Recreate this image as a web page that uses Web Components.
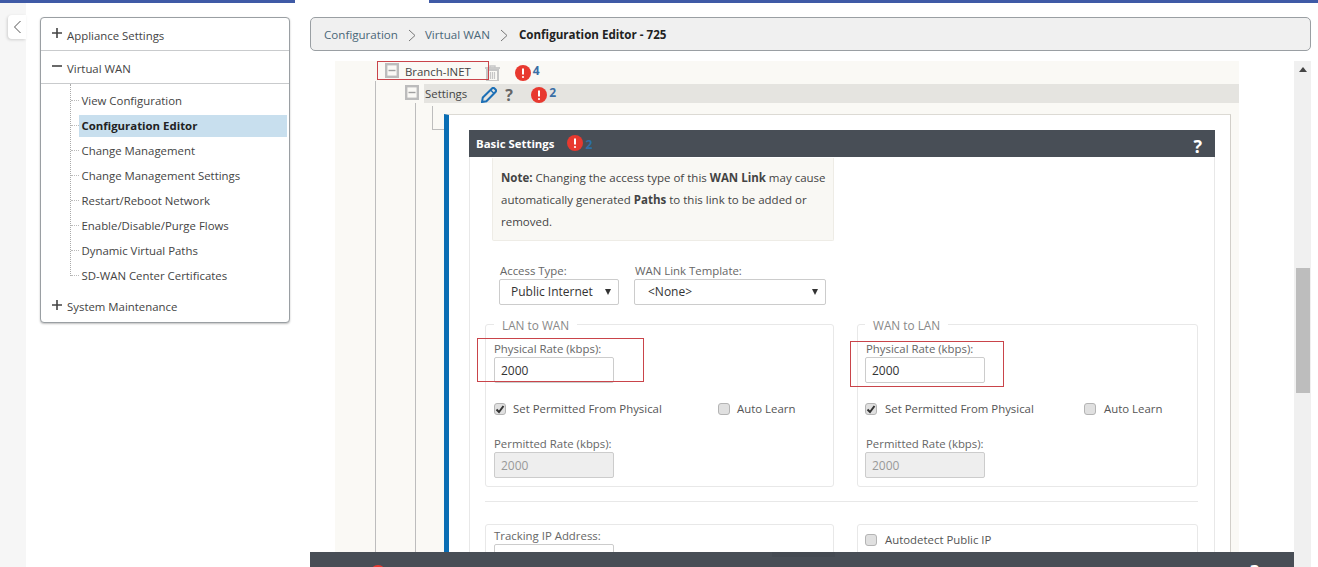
<!DOCTYPE html>
<html>
<head>
<meta charset="utf-8">
<title>Configuration Editor</title>
<style>
  html, body { margin: 0; height: 567px; overflow: hidden; background: #fff; }
  body { font: 11.4px/16px "Open Sans", "Liberation Sans", sans-serif; color: #444; }
  .gap-row { display: flex; gap: 23px; }
</style>
</head>
<body>
<top-stripe></top-stripe>
<app-layout>
  <collapse-rail></collapse-rail>
  <nav-panel>
    <nav-section label="Appliance Settings" icon="plus" divider></nav-section>
    <nav-section label="Virtual WAN" icon="minus" divider></nav-section>
    <nav-group>
      <nav-item>View Configuration</nav-item>
      <nav-item active>Configuration Editor</nav-item>
      <nav-item>Change Management</nav-item>
      <nav-item>Change Management Settings</nav-item>
      <nav-item>Restart/Reboot Network</nav-item>
      <nav-item>Enable/Disable/Purge Flows</nav-item>
      <nav-item>Dynamic Virtual Paths</nav-item>
      <nav-item>SD-WAN Center Certificates</nav-item>
    </nav-group>
    <nav-section label="System Maintenance" icon="plus"></nav-section>
  </nav-panel>
  <main-pane>
    <bread-crumb>
      <a>Configuration</a>
      <a>Virtual WAN</a>
      <b>Configuration Editor - 725</b>
    </bread-crumb>
    <scroll-pane>
      <config-tree>
        <tree-row slot="branch" label="Branch-INET" level="branch">
          <tree-icon name="trash" style="margin:4px 0 0 14px"></tree-icon>
          <alert-badge count="4" style="margin:4px 0 0 15px"></alert-badge>
        </tree-row>
        <tree-row slot="settings" label="Settings" level="settings">
          <tree-icon name="pencil" style="margin-left:14px"></tree-icon>
          <tree-icon name="help" style="margin-left:8px"></tree-icon>
          <alert-badge count="2" style="margin-left:18px"></alert-badge>
        </tree-row>
        <settings-card title="Basic Settings">
          <note-box>
            <b>Note:</b> Changing the access type of this <b>WAN Link</b> may cause automatically generated <b>Paths</b> to this link to be added or removed.
          </note-box>
          <select-row>
            <select-field label="Access Type:" value="Public Internet" width="120"></select-field>
            <select-field label="WAN Link Template:" value="&lt;None&gt;" width="192" pad="13"></select-field>
          </select-row>
          <div class="gap-row" style="margin-top:10px">
            <rate-group legend="LAN to WAN" width="349" auto="224" inset="8" mark="-8,23,167,44"></rate-group>
            <rate-group legend="WAN to LAN" width="341" auto="218" inset="7" mark="-7,26,154,46"></rate-group>
          </div>
          <line-rule></line-rule>
          <div class="gap-row">
            <plain-box width="349"><rate-field label="Tracking IP Address:"></rate-field></plain-box>
            <plain-box width="341"><check-field style="margin:4px 0 0 -1px;--check-gap:8px">Autodetect Public IP</check-field></plain-box>
          </div>
        </settings-card>
      </config-tree>
      <footer-bar slot="footer"></footer-bar>
    </scroll-pane>
  </main-pane>
</app-layout>

<script>
const stripeTmp = document.createElement('template');
stripeTmp.innerHTML = `
  <style>
    :host { display: flex; height: 3px; justify-content: space-between; }
    div { background: #3f5aa6; }
    .a { width: 295px; }
    .b { width: 889px; }
  </style>
  <div class="a"></div><div class="b"></div>`;

class TopStripe extends HTMLElement {
  connectedCallback() {
    this.attachShadow({ mode: 'open' }).appendChild(stripeTmp.content.cloneNode(true));
  }
}
customElements.define('top-stripe', TopStripe);

const layoutTmp = document.createElement('template');
layoutTmp.innerHTML = `
  <style>
    :host { display: flex; height: 564px; align-items: flex-start; }
  </style>
  <slot></slot>`;

class AppLayout extends HTMLElement {
  connectedCallback() {
    this.attachShadow({ mode: 'open' }).appendChild(layoutTmp.content.cloneNode(true));
  }
}
customElements.define('app-layout', AppLayout);

const railTmp = document.createElement('template');
railTmp.innerHTML = `
  <style>
    :host { display: block; width: 26px; height: 564px; background: #f6f6f6; padding-top: 12px; box-sizing: border-box; flex: none; }
    .tab { margin-left: 8px; width: 18px; height: 24px; background: #fff; border-radius: 4px 0 0 4px; box-shadow: -1px 1px 3px rgba(0,0,0,.16); display: flex; align-items: center; justify-content: center; }
  </style>
  <div class="tab">
    <svg width="9" height="14" viewBox="0 0 9 14"><path d="M7.5 1 1.5 7l6 6" fill="none" stroke="#555" stroke-width="1"/></svg>
  </div>`;

class CollapseRail extends HTMLElement {
  connectedCallback() {
    this.attachShadow({ mode: 'open' }).appendChild(railTmp.content.cloneNode(true));
  }
}
customElements.define('collapse-rail', CollapseRail);

const navTmp = document.createElement('template');
navTmp.innerHTML = `
  <style>
    :host { display: block; flex: none; width: 250px; margin: 14px 0 0 14px; box-sizing: border-box; border: 1px solid #9a9fa3; border-radius: 4px; box-shadow: 0 1px 2px rgba(0,0,0,.25); background: #fff; }
  </style>
  <slot></slot>`;

class NavPanel extends HTMLElement {
  connectedCallback() {
    this.attachShadow({ mode: 'open' }).appendChild(navTmp.content.cloneNode(true));
  }
}
customElements.define('nav-panel', NavPanel);

class NavSection extends HTMLElement {
  connectedCallback() {
    const plus = this.getAttribute('icon') === 'plus';
    const root = this.attachShadow({ mode: 'open' });
    root.innerHTML = `
      <style>
        :host { display: flex; align-items: center; height: 32px; padding-left: 11px; color: #444; }
        :host([divider]) { height: 33px; box-sizing: border-box; border-bottom: 1px solid #c9cbcd; }
        svg { margin-right: 5px; margin-top: -2px; }
        span { padding-top: 2px; }
        :host([divider]) span { padding-top: 3px; }
      </style>
      <svg width="10" height="10" viewBox="0 0 10 10">
        <path d="M0 5h10${plus ? 'M5 0v10' : ''}" stroke="#444" stroke-width="1.6" fill="none"/>
      </svg>
      <span>${this.getAttribute('label')}</span>`;
  }
}
customElements.define('nav-section', NavSection);

const groupTmp = document.createElement('template');
groupTmp.innerHTML = `
  <style>
    :host { display: block; box-sizing: border-box; height: 192px; margin: 0 0 14px 29px; padding-top: 4px; border-left: 1px dotted #aaa; }
  </style>
  <slot></slot>`;

class NavGroup extends HTMLElement {
  connectedCallback() {
    this.attachShadow({ mode: 'open' }).appendChild(groupTmp.content.cloneNode(true));
  }
}
customElements.define('nav-group', NavGroup);

const itemTmp = document.createElement('template');
itemTmp.innerHTML = `
  <style>
    :host { display: flex; align-items: center; height: 25px; }
    i { width: 8px; border-top: 1px dotted #bbb; flex: none; }
    span { flex: none; width: 208px; height: 22px; line-height: 22px; padding-left: 2.5px; box-sizing: border-box; color: #444; }
    :host([active]) span { background: #c8dfee; font-weight: 700; color: #222; }
  </style>
  <i></i><span><slot></slot></span>`;

class NavItem extends HTMLElement {
  connectedCallback() {
    this.attachShadow({ mode: 'open' }).appendChild(itemTmp.content.cloneNode(true));
  }
}
customElements.define('nav-item', NavItem);

const mainTmp = document.createElement('template');
mainTmp.innerHTML = `
  <style>
    :host { display: block; flex: none; width: 1001px; margin: 14px 0 0 20px; }
  </style>
  <slot></slot>`;

class MainPane extends HTMLElement {
  connectedCallback() {
    this.attachShadow({ mode: 'open' }).appendChild(mainTmp.content.cloneNode(true));
  }
}
customElements.define('main-pane', MainPane);

class BreadCrumb extends HTMLElement {
  connectedCallback() {
    const parts = [...this.children];
    const root = this.attachShadow({ mode: 'open' });
    const chevron = '<svg width="8" height="13" viewBox="0 0 8 13"><path d="M1 1l6 5.5L1 12" fill="none" stroke="#777" stroke-width="1"/></svg>';
    root.innerHTML = `
      <style>
        :host { display: flex; align-items: center; height: 34px; box-sizing: border-box; margin-bottom: 10px; padding: 2px 13px 0; background: #f0f0f0; border: 1px solid #9a9fa3; border-radius: 5px; color: #4a6778; font-size: 11.6px; }
        svg { margin: 0 9px 0 10px; }
        span + svg + span + svg { margin-right: 11px; }
        b { color: #222; }
      </style>
      ${parts.map(p => p.tagName === 'B' ? `<b>${p.textContent}</b>` : `<span>${p.textContent}</span>${chevron}`).join('')}`;
  }
}
customElements.define('bread-crumb', BreadCrumb);

const scrollTmp = document.createElement('template');
scrollTmp.innerHTML = `
  <style>
    :host { display: flex; height: 506px; }
    .col { width: 984px; flex: none; }
    .view { height: 491px; overflow: hidden; }
    .bar { width: 17px; flex: none; background: #f0f0f0; display: flex; flex-direction: column; align-items: center; }
    .up { margin-top: 6px; border: 4px solid transparent; border-top: 0; border-bottom: 5px solid #444; }
    .thumb { margin-top: 196px; width: 14px; height: 125px; background: #bdbdbd; }
  </style>
  <div class="col">
    <div class="view"><slot></slot></div>
    <slot name="footer"></slot>
  </div>
  <div class="bar"><div class="up"></div><div class="thumb"></div></div>`;

class ScrollPane extends HTMLElement {
  connectedCallback() {
    this.attachShadow({ mode: 'open' }).appendChild(scrollTmp.content.cloneNode(true));
  }
}
customElements.define('scroll-pane', ScrollPane);

const treeTmp = document.createElement('template');
treeTmp.innerHTML = `
  <style>
    :host { display: block; margin-left: 25px; width: 904px; height: 491px; background: #faf9f5; color: #444; overflow: hidden; }
    .top { padding-left: 50px; height: 20px; }
    .level1 { margin-left: 40px; border-left: 1px solid #bdbdbd; padding-top: 3px; height: 468px; }
    .level2 { margin-left: 39px; border-left: 1px solid #bdbdbd; height: 450px; display: flex; align-items: flex-start; }
    .elbow { flex: none; width: 12px; height: 24px; margin: 3px 0 0 16px; border-left: 1px solid #bdbdbd; border-bottom: 1px solid #bdbdbd; box-sizing: border-box; }
  </style>
  <div class="top"><slot name="branch"></slot></div>
  <div class="level1">
    <slot name="settings"></slot>
    <div class="level2">
      <div class="elbow"></div>
      <slot></slot>
    </div>
  </div>`;

class ConfigTree extends HTMLElement {
  connectedCallback() {
    this.attachShadow({ mode: 'open' }).appendChild(treeTmp.content.cloneNode(true));
  }
}
customElements.define('config-tree', ConfigTree);

class TreeRow extends HTMLElement {
  connectedCallback() {
    const settings = this.getAttribute('level') === 'settings';
    const root = this.attachShadow({ mode: 'open' });
    root.innerHTML = `
      <style>
        :host { display: flex; align-items: center; position: relative; height: ${settings ? 19 : 20}px; ${settings ? 'margin-left: 29px;' : ''} }
        .toggle { flex: none; margin-right: ${settings ? 5 : 6}px; ${settings ? 'margin-top: -3px;' : 'margin-top: -1px;'} }
        .label { color: #444; margin-top: ${settings ? 1 : 2}px; }
        .row { display: flex; align-items: center; height: 100%; ${settings ? 'flex: 1; background: #e5e4e0; padding-left: 1px;' : ''} }
        .mark { position: absolute; left: -8px; top: 0; width: 112px; height: 19px; border: 1px solid #c9444a; box-sizing: border-box; pointer-events: none; }
      </style>
      <svg class="toggle" width="14" height="15" viewBox="0 0 14 15">
        <rect x="1.2" y="1.2" width="11.6" height="12.6" fill="none" stroke="#bcbcbc" stroke-width="2.4"/>
        <path d="M3.5 7.5h7" stroke="#a0a0a0" stroke-width="1.4"/>
      </svg>
      <div class="row"><span class="label">${this.getAttribute('label')}</span><slot></slot></div>
      ${settings ? '' : '<div class="mark"></div>'}`;
  }
}
customElements.define('tree-row', TreeRow);

const treeIcons = {
  trash: `<svg width="15" height="16" viewBox="0 0 15 16" style="display:block"><path d="M0 3h15" stroke="#c6c6c6" stroke-width="1.8"/><path d="M5 3V1h5v2" fill="none" stroke="#c6c6c6" stroke-width="1.4"/><path d="M2 5h11v11H2z" fill="none" stroke="#c6c6c6" stroke-width="2"/><path d="M5.5 7v7M7.5 7v7M9.5 7v7" stroke="#c6c6c6" stroke-width="1.2"/></svg>`,
  pencil: `<svg width="16" height="16" viewBox="0 0 16 16" style="display:block"><path d="M1 15l.8-4.4L11 1.5a1.8 1.8 0 0 1 2.5 0l1 1a1.8 1.8 0 0 1 0 2.5L5.4 14.2z" fill="none" stroke="#1c6fb5" stroke-width="2"/><path d="M9.6 3l3.4 3.4" stroke="#1c6fb5" stroke-width="1.4"/></svg>`,
  help: `<span style="font:700 16px/16px 'Open Sans',sans-serif;color:#666;display:block;width:8px">?</span>`
};

class TreeIcon extends HTMLElement {
  connectedCallback() {
    const root = this.attachShadow({ mode: 'open' });
    root.innerHTML = `<style>:host { display: block; flex: none; margin-top: 3px; }</style>${treeIcons[this.getAttribute('name')]}`;
  }
}
customElements.define('tree-icon', TreeIcon);

class AlertBadge extends HTMLElement {
  connectedCallback() {
    const root = this.attachShadow({ mode: 'open' });
    root.innerHTML = `
      <style>
        :host { display: flex; flex: none; align-items: flex-start; height: 16px; margin-top: 3px; color: var(--count, #3a6ea5); }
        span { font-weight: 700; font-size: 12px; line-height: 12px; margin: var(--count-top, 0) 0 0 2px; }
      </style>
      <svg width="16" height="16" viewBox="0 0 16 16">
        <circle cx="8" cy="8" r="8" fill="#e8392f"/>
        <path d="M8 3.5v6" stroke="#fff" stroke-width="2"/>
        <circle cx="8" cy="12" r="1.1" fill="#fff"/>
      </svg>
      <span>${this.getAttribute('count')}</span>`;
  }
}
customElements.define('alert-badge', AlertBadge);

class SettingsCard extends HTMLElement {
  connectedCallback() {
    const root = this.attachShadow({ mode: 'open' });
    root.innerHTML = `
      <style>
        :host { display: block; flex: 1; margin: 11px 8px 0 0; height: 460px; box-sizing: border-box; background: #fff; border-left: 5px solid #0a6eb4; border-top: 1px solid #dcdad4; border-right: 1px solid #d2cfc9; padding: 15px 15px 0 20px; }
        header { display: flex; align-items: center; height: 27px; background: #484e56; color: #fff; font-weight: 700; padding: 0 13px 0 7px; --count: #2f6ea6; --count-top: 4px; }
        alert-badge { margin: -1px 0 0 13px; }
        .q { margin-left: auto; font-size: 18px; line-height: 27px; padding-top: 3px; box-sizing: border-box; height: 27px; }
        .body { border: 1px solid #e8e8e8; border-width: 0 1px; height: 420px; padding: 1px 16px 0 15px; box-sizing: border-box; }
      </style>
      <header><span>${this.getAttribute('title')}</span><alert-badge count="2"></alert-badge><span class="q">?</span></header>
      <div class="body"><slot></slot></div>`;
  }
}
customElements.define('settings-card', SettingsCard);

const noteTmp = document.createElement('template');
noteTmp.innerHTML = `
  <style>
    :host { display: block; width: 342px; margin-left: 7px; box-sizing: border-box; padding: 9px 0 7px 8px; background: #f9f8f4; border: 1px solid #eeece6; border-top: 0; border-radius: 0 0 2px 2px; font-size: 11.5px; line-height: 22px; color: #444; }
  </style>
  <slot></slot>`;

class NoteBox extends HTMLElement {
  connectedCallback() {
    this.attachShadow({ mode: 'open' }).appendChild(noteTmp.content.cloneNode(true));
  }
}
customElements.define('note-box', NoteBox);

const selectRowTmp = document.createElement('template');
selectRowTmp.innerHTML = `
  <style>
    :host { display: flex; gap: 15px; margin: 22px 0 0 14px; }
  </style>
  <slot></slot>`;

class SelectRow extends HTMLElement {
  connectedCallback() {
    this.attachShadow({ mode: 'open' }).appendChild(selectRowTmp.content.cloneNode(true));
  }
}
customElements.define('select-row', SelectRow);

class SelectField extends HTMLElement {
  connectedCallback() {
    const pad = this.getAttribute('pad') || 11;
    const value = this.getAttribute('value').replace(/</g, '&lt;');
    const root = this.attachShadow({ mode: 'open' });
    root.innerHTML = `
      <style>
        :host { display: block; width: ${this.getAttribute('width')}px; }
        label { display: block; padding-left: 1px; color: #666; white-space: nowrap; }
        .box { display: flex; align-items: center; height: 26px; box-sizing: border-box; padding: 0 7px 0 ${pad}px; border: 1px solid #ccc; border-radius: 2px; background: #fff; color: #333; font-size: 12px; }
        i { margin-left: auto; border: 3.5px solid transparent; border-bottom: 0; border-top: 6px solid #333; }
      </style>
      <label>${this.getAttribute('label')}</label>
      <div class="box"><span>${value}</span><i></i></div>`;
  }
}
customElements.define('select-field', SelectField);

class RateField extends HTMLElement {
  connectedCallback() {
    const off = this.hasAttribute('disabled');
    const root = this.attachShadow({ mode: 'open' });
    root.innerHTML = `
      <style>
        :host { display: block; width: 120px; }
        label { display: block; color: #666; white-space: nowrap; padding-left: var(--label-pad, 0); }
        .box { height: 26px; box-sizing: border-box; border: 1px solid #ccc; border-radius: 2px; padding-left: 6px; line-height: 25px; background: ${off ? '#eee' : '#fff'}; color: ${off ? '#999' : '#333'}; font-size: 12px; }
      </style>
      <label>${this.getAttribute('label')}</label>
      <div class="box">${this.getAttribute('value') || ''}</div>`;
  }
}
customElements.define('rate-field', RateField);

class CheckField extends HTMLElement {
  connectedCallback() {
    const on = this.hasAttribute('checked');
    const root = this.attachShadow({ mode: 'open' });
    root.innerHTML = `
      <style>
        :host { display: flex; align-items: center; height: 16px; color: #555; white-space: nowrap; }
        .box { flex: none; width: 12px; height: 12px; box-sizing: border-box; border: 1px solid #b4b4b4; border-radius: 3px; background: #e0e0e0; margin-right: var(--check-gap, 7px); display: flex; }
      </style>
      <span class="box">${on ? '<svg width="10" height="10" viewBox="0 0 10 10"><path d="M1.5 5.5 4 8l4.5-6" fill="none" stroke="#333" stroke-width="2"/></svg>' : ''}</span>
      <span><slot></slot></span>`;
  }
}
customElements.define('check-field', CheckField);

class RateGroup extends HTMLElement {
  connectedCallback() {
    const root = this.attachShadow({ mode: 'open' });
    const [left, top, w, h] = this.getAttribute('mark').split(',');
    const inset = Number(this.getAttribute('inset'));
    root.innerHTML = `
      <style>
        :host { display: block; position: relative; flex: none; width: ${this.getAttribute('width')}px; --label-pad: ${8 - inset}px; --check-gap: ${15 - inset}px; }
        fieldset { margin: 0; padding: 8px 8px 8px ${inset}px; border: 1px solid #e8e8e8; border-radius: 3px; }
        legend { margin-left: 0; padding: 2px 8px 0; color: #888; line-height: 16px; font-size: 11.8px; }
        .checks { display: flex; margin: 18px 0 19px; }
        .checks check-field:last-child { position: absolute; }
        .mark { position: absolute; left: ${left}px; top: ${top}px; width: ${w}px; height: ${h}px; border: 1px solid #c9444a; box-sizing: border-box; }
      </style>
      <fieldset>
        <legend>${this.getAttribute('legend')}</legend>
        <rate-field label="Physical Rate (kbps):" value="2000"></rate-field>
        <div class="checks">
          <check-field checked>Set Permitted From Physical</check-field>
          <check-field style="left:${Number(this.getAttribute('auto')) + 9}px">Auto Learn</check-field>
        </div>
        <rate-field label="Permitted Rate (kbps):" value="2000" disabled></rate-field>
      </fieldset>
      <div class="mark"></div>`;
  }
}
customElements.define('rate-group', RateGroup);

const ruleTmp = document.createElement('template');
ruleTmp.innerHTML = `<style>:host { display: block; height: 1px; background: #e8e8e8; margin: 14px 0 22px; }</style>`;

class LineRule extends HTMLElement {
  connectedCallback() {
    this.attachShadow({ mode: 'open' }).appendChild(ruleTmp.content.cloneNode(true));
  }
}
customElements.define('line-rule', LineRule);

class PlainBox extends HTMLElement {
  connectedCallback() {
    const root = this.attachShadow({ mode: 'open' });
    root.innerHTML = `
      <style>
        :host { display: block; flex: none; height: 80px; width: ${this.getAttribute('width')}px; box-sizing: border-box; padding: 3px 8px; border: 1px solid #e8e8e8; border-radius: 3px; }
      </style>
      <slot></slot>`;
  }
}
customElements.define('plain-box', PlainBox);

const footerTmp = document.createElement('template');
footerTmp.innerHTML = `
  <style>
    :host { display: flex; height: 15px; overflow: hidden; background: #484e56; color: #fff; position: relative; }
    .dot { width: 16px; height: 16px; border-radius: 50%; background: #e8392f; margin: 13px 0 0 60px; flex: none; }
    .q { margin-left: auto; margin-right: 35px; font-weight: 700; font-size: 18px; line-height: 27px; margin-top: 6px; }
    .shade { position: absolute; left: 462px; top: 0; width: 63px; height: 5px; background: #444a52; }
  </style>
  <div class="dot"></div><div class="shade"></div><div class="q">?</div>`;

class FooterBar extends HTMLElement {
  connectedCallback() {
    this.attachShadow({ mode: 'open' }).appendChild(footerTmp.content.cloneNode(true));
  }
}
customElements.define('footer-bar', FooterBar);
</script>
</body>
</html>
